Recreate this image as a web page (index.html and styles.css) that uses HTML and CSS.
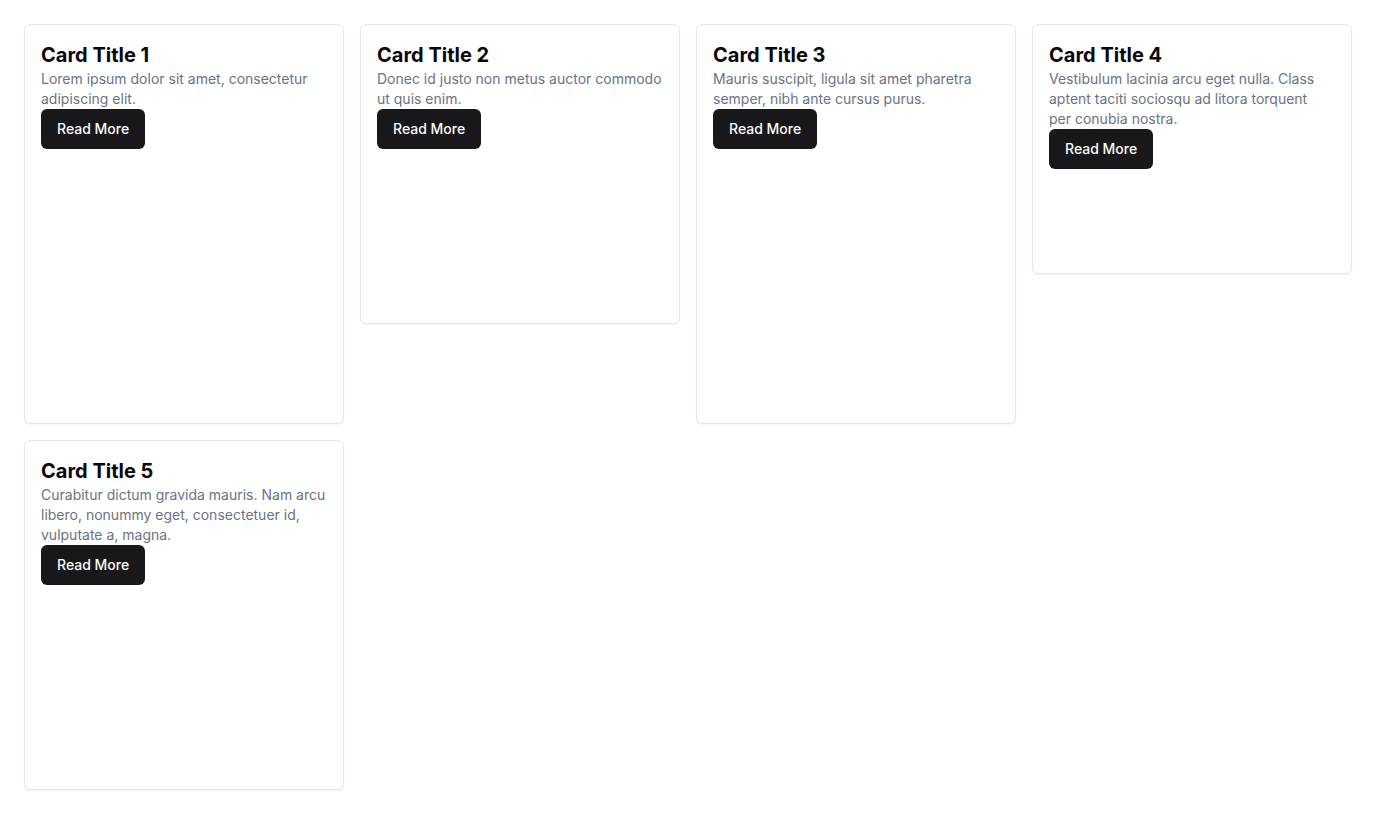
FILE: index.html
```html
<!DOCTYPE html>
<html lang="en">
<head>
<meta charset="utf-8">
<title>Cards</title>
<link rel="stylesheet" href="styles.css">
</head>
<body>
<main class="grid">
  <article class="card h-400">
    <h2 class="card-title">Card Title 1</h2>
    <p class="card-text">Lorem ipsum dolor sit amet, consectetur adipiscing elit.</p>
    <button class="btn">Read More</button>
  </article>
  <article class="card h-300">
    <h2 class="card-title">Card Title 2</h2>
    <p class="card-text">Donec id justo non metus auctor commodo ut quis enim.</p>
    <button class="btn">Read More</button>
  </article>
  <article class="card h-400">
    <h2 class="card-title">Card Title 3</h2>
    <p class="card-text">Mauris suscipit, ligula sit amet pharetra semper, nibh ante cursus purus.</p>
    <button class="btn">Read More</button>
  </article>
  <article class="card h-250">
    <h2 class="card-title">Card Title 4</h2>
    <p class="card-text card-text-tight">Vestibulum lacinia arcu eget nulla. Class aptent taciti sociosqu ad litora torquent per conubia nostra.</p>
    <button class="btn">Read More</button>
  </article>
  <article class="card h-350">
    <h2 class="card-title">Card Title 5</h2>
    <p class="card-text">Curabitur dictum gravida mauris. Nam arcu libero, nonummy eget, consectetuer id, vulputate a, magna.</p>
    <button class="btn">Read More</button>
  </article>
</main>
</body>
</html>
```
FILE: styles.css
```css
* { box-sizing: border-box; }
html, body { margin: 0; padding: 0; background: #ffffff; }
body { font-family: Inter, "Liberation Sans", sans-serif; color: #09090b; }
.grid {
  display: grid;
  grid-template-columns: repeat(4, 1fr);
  gap: 16px;
  padding: 24px;
  align-items: start;
}
.card {
  border: 1px solid #e5e7eb;
  border-radius: 6px;
  background: #fff;
  box-shadow: 0 1px 2px rgba(0,0,0,0.05);
  padding: 16px;
  display: flex;
  flex-direction: column;
  align-items: flex-start;
}
.h-400 { height: 400px; }
.h-300 { height: 300px; }
.h-250 { height: 250px; }
.h-350 { height: 350px; }
.card-title {
  margin: 0;
  font-size: 20px;
  line-height: 28px;
  font-weight: 700;
  color: #09090b;
}
.card-text {
  margin: 0;
  font-size: 14px;
  line-height: 20px;
  color: #6b7280;
}
.card-text-tight { padding-right: 4px; }
.btn {
  font-family: inherit;
  height: 40px;
  padding: 0 16px;
  border: none;
  border-radius: 6px;
  background: #18181b;
  color: #fafafa;
  font-size: 14px;
  font-weight: 500;
  line-height: 20px;
  cursor: pointer;
}
```
